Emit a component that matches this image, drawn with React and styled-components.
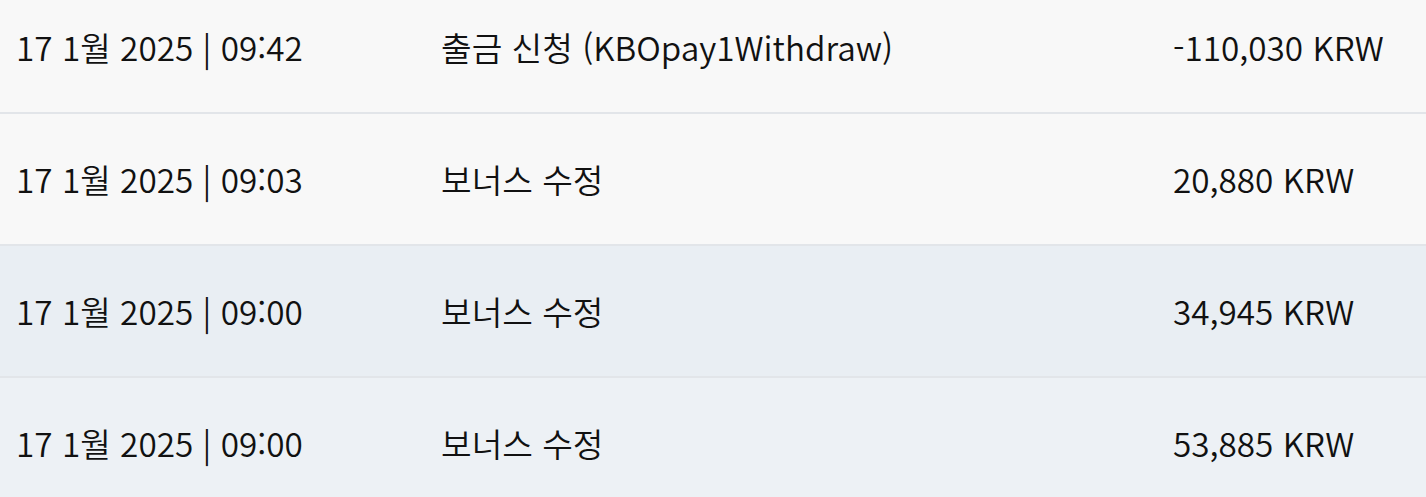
import React from 'react';
import styled, { createGlobalStyle } from 'styled-components';

const GlobalStyle = createGlobalStyle`
  html, body {
    margin: 0;
    padding: 0;
    background: #f8f8f8;
    overflow: hidden;
  }
  body {
    font-family: "Noto Sans CJK KR", "Noto Sans", sans-serif;
    color: #111;
  }
`;

const rows = [
  { date: '17 1월 2025 | 09:42', desc: '출금 신청 (KBOpay1Withdraw)', amount: '-110,030 KRW', tone: 'plain' },
  { date: '17 1월 2025 | 09:03', desc: '보너스 수정', amount: '20,880 KRW', tone: 'plain' },
  { date: '17 1월 2025 | 09:00', desc: '보너스 수정', amount: '34,945 KRW', tone: 'blue' },
  { date: '17 1월 2025 | 09:00', desc: '보너스 수정', amount: '53,885 KRW', tone: 'light' }
];

const backgrounds = {
  plain: '#f8f8f8',
  blue: '#e9eef3',
  light: '#edf1f5'
};

const Table = styled.div`
  display: flex;
  flex-direction: column;
  margin-top: -18px;
`;

const Row = styled.div`
  display: grid;
  grid-template-columns: 425px 732px 1fr;
  align-items: center;
  height: 130px;
  padding-left: 16px;
  background: ${props => backgrounds[props.tone]};
  border-bottom: 2px solid #e2e5e9;
  font-size: 33.3px;
  font-weight: 350;
  line-height: 1;
  white-space: nowrap;
`;

const Cell = styled.div``;

export default function App() {
  return (
    <>
      <GlobalStyle />
      <Table lang="ko">
        {rows.map((r, i) => (
          <Row key={i} tone={r.tone}>
            <Cell>{r.date}</Cell>
            <Cell>{r.desc}</Cell>
            <Cell>{r.amount}</Cell>
          </Row>
        ))}
      </Table>
    </>
  );
}
